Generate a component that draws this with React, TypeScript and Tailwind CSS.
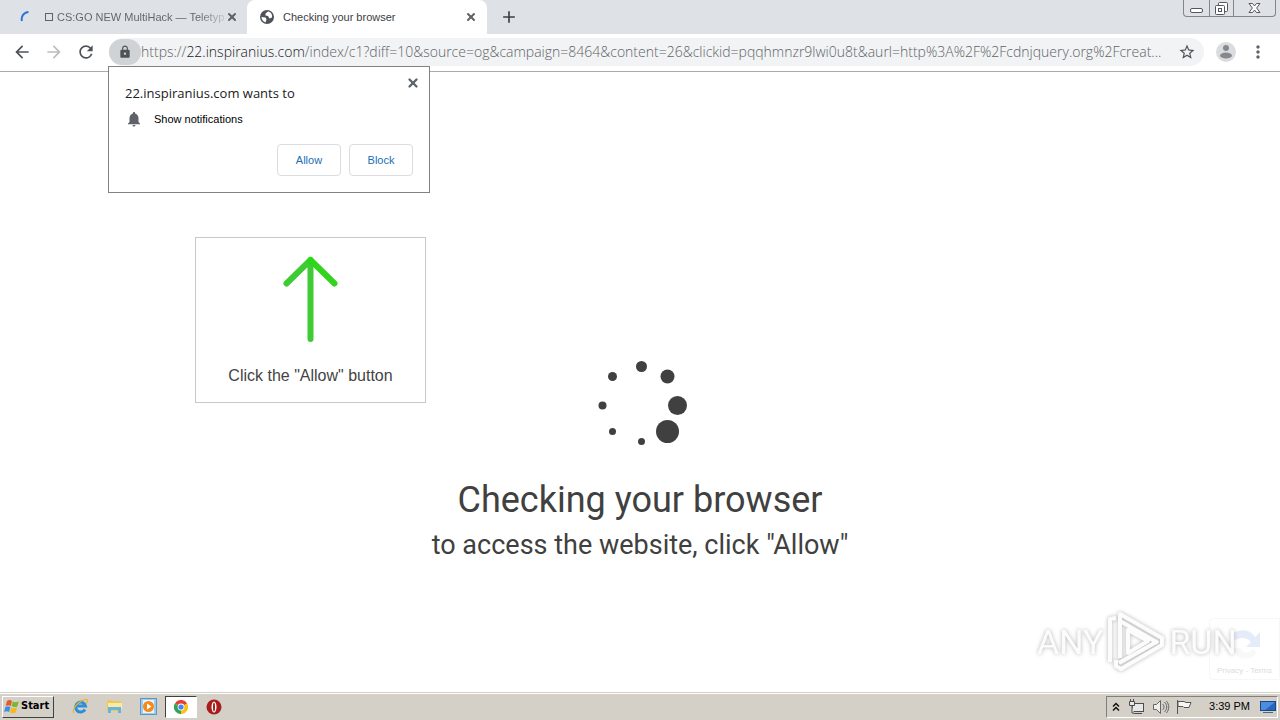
import type { FC, ReactNode } from 'react';
import { X } from 'lucide-react';
import {
  MdArrowBack,
  MdArrowForward,
  MdRefresh,
  MdLock,
  MdStarBorder,
  MdMoreVert,
  MdNotifications,
  MdAdd
} from 'react-icons/md';

const SCHEME = 'https://';
const HOST = '22.inspiranius.com';
const PATH =
  '/index/c1?diff=10&source=og&campaign=8464&content=26&clickid=pqqhmnzr9lwi0u8t&aurl=http%3A%2F%2Fcdnjquery.org%2Fcreat...';

const SPINNER_DOTS = [
  { x: 52.5, y: 15.5, r: 5.5 },
  { x: 78.5, y: 25.5, r: 7 },
  { x: 88.5, y: 54.5, r: 9.5 },
  { x: 78.5, y: 80.5, r: 11.5 },
  { x: 52.5, y: 90.5, r: 3.5 },
  { x: 23.5, y: 80.5, r: 3.5 },
  { x: 13.5, y: 54.5, r: 4 },
  { x: 23.5, y: 25.5, r: 4.5 }
];

const WindowControls: FC = () => (
  <div className="flex h-[17px] rounded-b border border-t-0 border-[#81868f] bg-[#dee1e6] mr-1">
    <button aria-label="Minimize" className="flex w-[25px] items-center justify-center">
      <svg width="13" height="16" viewBox="0 0 13 16">
        <rect x="0.5" y="8.5" width="12" height="4" rx="1.5" fill="#fff" stroke="#52565e" />
      </svg>
    </button>
    <button aria-label="Restore" className="flex w-[25px] items-center justify-center border-x border-[#81868f]">
      <svg width="13" height="16" viewBox="0 0 13 16" fill="#fff" stroke="#52565e">
        <rect x="3.5" y="2.5" width="9" height="9" rx="1" />
        <rect x="0.5" y="5.5" width="9" height="9" rx="1" />
        <rect x="3.5" y="8.5" width="3" height="3" />
      </svg>
    </button>
    <button aria-label="Close window" className="flex w-[41px] items-center justify-center">
      <svg width="13" height="16" viewBox="0 0 13 16">
        <path
          d="M1 3.5h3.5l2 2.5 2-2.5H12L8.6 8l3.4 4.5H8.5l-2-2.5-2 2.5H1L4.4 8z"
          fill="#fff"
          stroke="#52565e"
        />
      </svg>
    </button>
  </div>
);

const TabStrip: FC = () => (
  <div className="flex h-[34px] items-start justify-between bg-[#dee1e6] font-[Liberation_Sans,sans-serif] text-[11px]">
    <div className="flex h-full">
      <div className="flex w-[247px] items-center pl-5 pr-[9px] text-[#5f6368]">
        <svg width="14" height="16" viewBox="0 0 14 16" className="shrink-0">
          <path d="M2 12A7 7 0 0 1 8.5 3" fill="none" stroke="#2f74dd" strokeWidth="2" />
        </svg>
        <span className="ml-[11px] flex flex-1 items-center whitespace-nowrap">
          <span className="mr-1 size-2 border border-[#5f6368]" />
          <span className="bg-linear-to-r from-[#5f6368] from-85% to-[#5f6368]/20 bg-clip-text text-transparent">
            CS:GO NEW MultiHack — Teletyp
          </span>
        </span>
        <button aria-label="Close tab">
          <X className="size-3" strokeWidth={4} />
        </button>
      </div>
      <div className="flex w-[240px] items-center rounded-t-lg bg-white pl-3 pr-[10px] text-[#3c4043]">
        <svg width="16" height="16" viewBox="0 0 16 16" className="shrink-0">
          <circle cx="8" cy="8" r="7" fill="#4f5358" />
          <path
            d="M9 2.5L6.5 4.5v2l2.5.5 1.500 2.5 2.5-1c.5-3-1-5.500-4-6zM2.5 8l4 .5 1 2-1 3C4 12.5 2.500 10.500 2.500 8z"
            fill="#fff"
          />
        </svg>
        <span className="ml-2 flex-1 whitespace-nowrap">Checking your browser</span>
        <button aria-label="Close active tab">
          <X className="size-3 text-[#5f6368]" strokeWidth={4} />
        </button>
      </div>
      <button aria-label="New tab" className="ml-3 self-center">
        <MdAdd className="size-5 text-[#3c4043]" />
      </button>
    </div>
    <WindowControls />
  </div>
);

const Toolbar: FC = () => (
  <div className="flex h-[38px] items-center border-b border-[#a9a9a9] bg-white pb-px pr-3 text-[#5f6368]">
    <div className="flex items-center gap-3 pl-3">
      <button aria-label="Back">
        <MdArrowBack className="size-5 text-[#4f5358]" />
      </button>
      <button aria-label="Forward">
        <MdArrowForward className="size-5 text-[#bbbdc0]" />
      </button>
      <button aria-label="Reload">
        <MdRefresh className="size-5 text-[#4f5358]" />
      </button>
    </div>
    <div className="ml-[13px] flex h-7 min-w-0 flex-1 items-center rounded-full bg-[#f1f3f4] pr-2">
      <button
        aria-label="Site information"
        className="flex h-[26px] w-8 shrink-0 items-center justify-center rounded-full bg-[#d0d3d6]"
      >
        <MdLock className="size-[14px] text-[#4f5358]" />
      </button>
      <div className="flex min-w-0 flex-1 items-center whitespace-nowrap font-[Open_Sans,sans-serif] text-sm font-light">
        <label htmlFor="address" className="shrink-0">
          {SCHEME}
          <span className="text-[#202124]">{HOST}</span>
        </label>
        <input
          id="address"
          type="text"
          defaultValue={PATH}
          spellCheck={false}
          className="min-w-0 flex-1 bg-transparent outline-none"
        />
      </div>
      <button aria-label="Bookmark this page" className="ml-3 shrink-0">
        <MdStarBorder className="size-[18px] text-[#4f5358]" />
      </button>
    </div>
    <button aria-label="Profile" className="ml-3">
      <svg width="20" height="20" viewBox="0 0 20 20">
        <circle cx="10" cy="10" r="10" fill="#dadce0" />
        <circle cx="10" cy="6" r="3" fill="#85898e" />
        <ellipse cx="10" cy="13.5" rx="6" ry="3" fill="#85898e" />
      </svg>
    </button>
    <button aria-label="Menu" className="ml-3">
      <MdMoreVert className="size-5" />
    </button>
  </div>
);

const PermissionPrompt: FC = () => (
  <div
    role="dialog"
    aria-label="Permission request"
    className="absolute left-[108px] top-[66px] z-10 h-[127px] w-[322px] border border-[#828282] bg-white px-4 pt-4"
  >
    <button aria-label="Dismiss" className="absolute right-[9px] top-[9px]">
      <X className="size-[14px] text-[#5f6368]" strokeWidth={4} />
    </button>
    <p className="font-[Open_Sans,sans-serif] text-[13px] leading-5 text-[#202124]">{HOST} wants to</p>
    <div className="mt-[7px] flex items-center gap-[11px] font-[Liberation_Sans,sans-serif] text-[11px] leading-4 text-black">
      <MdNotifications className="size-[18px] text-[#5f6368]" />
      Show notifications
    </div>
    <div className="mt-4 flex justify-end gap-2 font-[Liberation_Sans,sans-serif] text-[11px] text-[#1a6fb5]">
      <button className="h-8 w-16 rounded border border-[#dadce0]">Allow</button>
      <button className="h-8 w-16 rounded border border-[#dadce0]">Block</button>
    </div>
  </div>
);

const AllowHint: FC = () => (
  <div className="absolute left-[195px] top-[165px] flex h-[166px] w-[231px] flex-col items-center border border-[#c8c8c8] bg-white pt-[18px]">
    <svg width="56" height="88" viewBox="0 0 56 88" fill="none" strokeLinecap="round" strokeLinejoin="round">
      <path d="M27.5 4V83M27.5 4L3.500 27.5" stroke="#3ecb34" strokeWidth="6" />
      <path d="M27.5 4l24 23.5" stroke="#32d41e" strokeWidth="6" />
      <circle cx="27.5" cy="5" r="3" fill="#25dc10" />
    </svg>
    <p className="mt-5 font-[Liberation_Sans,sans-serif] text-base leading-6 text-[#444]">
      Click the "Allow" button
    </p>
  </div>
);

const Watermark: FC = () => (
  <div className="absolute bottom-3 right-0 flex h-[76px] w-[243px] items-center">
    <div className="absolute bottom-0 right-0 flex h-[62px] w-[71px] flex-col items-center justify-end rounded-l border border-[#f7f7f7] pb-[3px]">
      <svg width="34" height="34" viewBox="0 0 34 34" className="mb-1">
        <path d="M3 7c9-8 20-5 24 2l5-5v15H18l5-5C18 8 10 9 3 15z" fill="#e6ebf9" />
        <path d="M4 20c5 13 18 14 25 4l-4-3c-5 5-10 5-13-1z" fill="#f8f8f8" />
      </svg>
      <span className="whitespace-nowrap font-[Liberation_Sans,sans-serif] text-[8px] leading-[10px] text-[#dcdcdc]">
        Privacy - Terms
      </span>
    </div>
    <div className="relative flex items-center gap-[3px] font-[Roboto,sans-serif] text-[34px] leading-10 text-[#fcfcfc] drop-shadow-[0_0_2px_#b4b4b4]">
      <span>ANY</span>
      <svg
        width="60"
        height="66"
        viewBox="0 0 60 66"
        fill="none"
        stroke="#fcfcfc"
        strokeWidth="4"
        strokeLinejoin="round"
      >
        <path d="M14 49V5l42 24v7L15 60l-5-3V51M4 53V10l6-1M14 12l38 22M22 21v23l20-12zM13 54l39-22" />
      </svg>
      <span>RUN</span>
    </div>
  </div>
);

const Page: FC = () => (
  <main className="relative flex flex-1 flex-col items-center bg-white pt-[279px] font-[Roboto,sans-serif] text-[#404040]">
    <AllowHint />
    <svg width="102" height="102" viewBox="0 0 102 102" fill="#404040" role="img" aria-label="Loading">
      {SPINNER_DOTS.map(({ x, y, r }) => (
        <circle key={`${x}-${y}`} cx={x} cy={y} r={r} />
      ))}
    </svg>
    <h1 className="mt-[25px] text-4xl leading-[44px]">Checking your browser</h1>
    <p className="mt-[7px] text-[27px] leading-8">to access the website, click "Allow"</p>
    <Watermark />
  </main>
);

const TaskButton: FC<{ label: string; active?: boolean; children: ReactNode }> = ({ label, active, children }) => (
  <button
    aria-label={label}
    className={
      active
        ? 'flex h-[22px] w-8 items-center justify-center border border-b-white border-l-[#404040] border-r-white border-t-[#404040] bg-white'
        : 'flex h-[22px] w-[34px] items-center justify-center'
    }
  >
    {children}
  </button>
);

const Taskbar: FC = () => (
  <footer className="flex h-[28px] items-center justify-between border-t border-[#d4d0c8] bg-[#d4d0c8] pl-[2px] pr-[2px] shadow-[inset_0_1px_0_#ffffff]">
    <div className="flex items-center">
      <button className="mr-[9px] flex h-[22px] w-[52px] items-center gap-px border border-b-[#404040] border-l-white border-r-[#404040] border-t-white pl-px font-[DejaVu_Sans_Condensed,DejaVu_Sans,sans-serif] text-[11px] font-bold text-black">
        <svg width="16" height="16" viewBox="0 0 16 16" className="shrink-0">
          <path d="M3 2c2-1.500 3.500-1 5 0L6.800 7C5.200 6 3.500 6 1.700 7z" fill="#e7582b" />
          <path d="M8.800 2.500c2 1 3.500 1 6 0l-1.500 5c-2 1-4 .5-5.700-.5z" fill="#77b82d" />
          <path d="M1.400 8c2-1 3.500-.8 5 0l-1.300 5c-1.500-1-3-1-5 0z" fill="#3c8fe0" />
          <path d="M7.300 8.500c2 1 3.500 1 5.700 0l-1.400 5c-2 1-4 .8-5.600-.2z" fill="#f6b722" />
        </svg>
        Start
      </button>
      <TaskButton label="Internet Explorer">
        <svg width="17" height="17" viewBox="0 0 17 17" fill="none">
          <path d="M13 11.5a5 5 0 1 1 .5-3.500H5" stroke="#2b8fd9" strokeWidth="3" />
          <path d="M2 15C-1 11 7 3 13 1.500c4-.5 2 3 1 4" stroke="#e9b52e" strokeWidth="1.2" />
        </svg>
      </TaskButton>
      <TaskButton label="File Explorer">
        <svg width="17" height="17" viewBox="0 0 17 17">
          <path d="M1 2h5l1 1h8v10H1z" fill="#edc95b" />
          <path d="M2 5h14v6H2z" fill="#fbe9a1" />
          <path d="M2 15V9h13v6h-3v-3H5v3z" fill="#65b5df" />
        </svg>
      </TaskButton>
      <TaskButton label="Media Player">
        <svg width="17" height="17" viewBox="0 0 17 17">
          <rect x="0.5" y="0.5" width="16" height="16" fill="#9fcbee" stroke="#5a96c9" />
          <rect x="3" y="2" width="11" height="13" fill="#e8f4ff" />
          <circle cx="8.5" cy="8.5" r="5.5" fill="#f48a17" />
          <path d="M7 5.5v6l4.500-3z" fill="#fff" />
        </svg>
      </TaskButton>
      <TaskButton label="Chrome" active>
        <svg width="14" height="14" viewBox="0 0 14 14">
          <path d="M7 7L.9 3.500A7 7 0 0 1 13.100 3.500z" fill="#e44134" />
          <path d="M7 7L.9 3.500A7 7 0 0 0 7 14l3-5z" fill="#34a350" />
          <path d="M7 7h-.1L13.100 3.500A7 7 0 0 1 7 14z" fill="#fbc116" />
          <circle cx="7" cy="7" r="3.4" fill="#fff" />
          <circle cx="7" cy="7" r="2.6" fill="#4285f4" />
        </svg>
      </TaskButton>
      <TaskButton label="Opera">
        <svg width="16" height="16" viewBox="0 0 16 16">
          <circle cx="8" cy="8" r="7.5" fill="#a91c1c" />
          <ellipse cx="8" cy="8" rx="2.5" ry="5.5" fill="#fff" />
          <ellipse cx="8" cy="8" rx="1" ry="4.5" fill="#a91c1c" />
        </svg>
      </TaskButton>
    </div>
    <div className="flex h-[22px] items-center border border-b-white border-l-[#808080] border-r-white border-t-[#808080] pl-[5px] pr-px font-[Liberation_Sans,sans-serif] text-[11px] text-black">
      <button aria-label="Show hidden icons">
        <svg width="8" height="10" viewBox="0 0 8 10" fill="none" stroke="#111" strokeWidth="1.5">
          <path d="M1 4.5l3-3 3 3M1 8.5l3-3 3 3" />
        </svg>
      </button>
      <svg width="18" height="16" viewBox="0 0 18 16" fill="#e8e8e8" stroke="#4d4d4d" className="ml-2">
        <rect x="4.5" y="4.5" width="11" height="8" />
        <path d="M6 14.5h8M1.500 2.500h5v4h-5zM2.500 0v3M5.500 0v3M4 7v7h2" />
      </svg>
      <svg width="18" height="16" viewBox="0 0 18 16" fill="#eee" stroke="#666" className="ml-[6px]">
        <path d="M1.500 5.500h3l4-4v13l-4-4h-3z" />
        <path d="M10.500 5c2 2 2 4 0 6M12.500 3c3 3 3 7 0 10M14.500 2c3 4 3 8 0 12" fill="none" />
      </svg>
      <svg width="17" height="16" viewBox="0 0 17 16" fill="#f5f5f5" stroke="#555" className="ml-[6px]">
        <path d="M1.500 1v14M2 2.500h6l2 1h5l-2 5H8l-1-1H2z" />
      </svg>
      <time className="ml-4 whitespace-nowrap">3:39 PM</time>
      <svg width="16" height="14" viewBox="0 0 16 14" className="ml-[10px]">
        <rect x="0.5" y="1.5" width="15" height="9" fill="#2566c0" stroke="#174887" />
        <path d="M1 2h14L5 10H1z" fill="#4e8ddd" />
        <path d="M3 12.5h10" stroke="#49688e" />
      </svg>
    </div>
  </footer>
);

export default function App() {
  return (
    <div className="relative flex min-h-screen flex-col overflow-hidden bg-white">
      <TabStrip />
      <Toolbar />
      <PermissionPrompt />
      <Page />
      <Taskbar />
    </div>
  );
}
